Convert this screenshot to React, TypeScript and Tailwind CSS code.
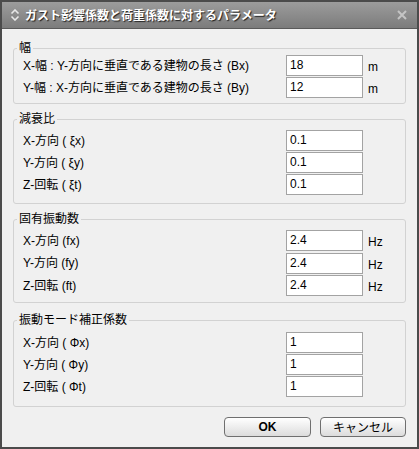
import type { ReactNode } from "react";

type Row = { label: string; value: string; unit?: string };

const groups: { title: string; mt: string; pt: string; pb: string; gap: string; rows: Row[] }[] = [
  {
    title: "幅",
    mt: "mt-[12px]",
    pt: "pt-0",
    pb: "pb-[5px]",
    gap: "gap-[1px]",
    rows: [
      { label: "X-幅 : Y-方向に垂直である建物の長さ (Bx)", value: "18", unit: "m" },
      { label: "Y-幅 : X-方向に垂直である建物の長さ (By)", value: "12", unit: "m" },
    ],
  },
  {
    title: "減衰比",
    mt: "mt-[8px]",
    pt: "pt-[4px]",
    pb: "pb-[8px]",
    gap: "gap-[1px]",
    rows: [
      { label: "X-方向 ( ξx)", value: "0.1" },
      { label: "Y-方向 ( ξy)", value: "0.1" },
      { label: "Z-回転 ( ξt)", value: "0.1" },
    ],
  },
  {
    title: "固有振動数",
    mt: "mt-[8px]",
    pt: "pt-[4px]",
    pb: "pb-[6px]",
    gap: "gap-[1.5px]",
    rows: [
      { label: "X-方向 (fx)", value: "2.4", unit: "Hz" },
      { label: "Y-方向 (fy)", value: "2.4", unit: "Hz" },
      { label: "Z-回転 (ft)", value: "2.4", unit: "Hz" },
    ],
  },
  {
    title: "振動モード補正係数",
    mt: "mt-[10px]",
    pt: "pt-[5px]",
    pb: "pb-[9px]",
    gap: "gap-[1px]",
    rows: [
      { label: "X-方向 ( Φx)", value: "1" },
      { label: "Y-方向 ( Φy)", value: "1" },
      { label: "Z-回転 ( Φt)", value: "1" },
    ],
  },
];

const Group = ({ title, className, children }: { title: string; className: string; children: ReactNode }) => (
  <fieldset className={`mx-[11px] rounded-[3px] border border-[#d2d2d2] px-0 ${className}`}>
    <legend className="ml-[3px] px-[2px] text-[12px] leading-[14px] text-black">{title}</legend>
    {children}
  </fieldset>
);

export default function App() {
  return (
    <div
      className="flex h-[449px] w-[419px] flex-col border-2 border-[#4b4b4b] bg-[#f0f0f0] text-black"
      style={{ fontFamily: '"Liberation Sans", "Noto Sans CJK JP", sans-serif' }}
    >
      {/* タイトルバー */}
      <div className="flex h-[27px] shrink-0 items-center border-b border-[#5a5a5a] bg-gradient-to-b from-[#9c9c9c] to-[#7c7c7c] pl-[8px] pr-[10px]">
        <svg width="10" height="12" viewBox="0 0 10 12" className="mr-[5px]">
          <path d="M1.5 4.5 L5 1 L8.5 4.5" fill="none" stroke="#e8e8e8" strokeWidth="1.6" />
          <path d="M1.5 7.5 L5 11 L8.5 7.5" fill="none" stroke="#e8e8e8" strokeWidth="1.6" />
        </svg>
        <span
          className="text-[12px] font-bold leading-none text-white"
          style={{ fontFamily: '"Noto Sans CJK JP", sans-serif', textShadow: "1px 1px 1px #202020" }}
        >
          ガスト影響係数と荷重係数に対するパラメータ
        </span>
        <svg width="10" height="10" viewBox="0 0 10 10" className="ml-auto">
          <path d="M1 1 L9 9 M9 1 L1 9" stroke="#c4c4c4" strokeWidth="2" />
        </svg>
      </div>

      {groups.map((g) => (
        <Group key={g.title} title={g.title} className={`${g.mt} ${g.pb}`}>
          <div className={`flex flex-col ${g.pt} ${g.gap}`}>
            {g.rows.map((r) => (
              <div key={r.label} className="flex h-[21px] items-center pl-[9px]">
                <span className="w-[263px] text-[12px] leading-none">{r.label}</span>
                <div className="h-[21px] w-[77px] border border-[#a3a3a3] bg-white px-[3px] pt-[2px] text-[12px] leading-[14px]">
                  {r.value}
                </div>
                {r.unit && <span className="ml-[5px] pt-[3px] text-[12px]">{r.unit}</span>}
              </div>
            ))}
          </div>
        </Group>
      ))}

      {/* ボタン */}
      <div className="mr-[11px] mt-[10px] flex justify-end gap-[9px]">
        <button className="h-[20px] w-[87px] rounded-[4px] border border-[#6f6f6f] bg-gradient-to-b from-white to-[#dcdcdc] text-[12px] font-bold leading-none">
          OK
        </button>
        <button
          className="h-[20px] w-[86px] rounded-[4px] border border-[#6f6f6f] bg-gradient-to-b from-white to-[#dcdcdc] text-[12px] leading-none"
          style={{ fontFamily: '"Noto Sans CJK JP", sans-serif' }}
        >
          キャンセル
        </button>
      </div>
    </div>
  );
}
